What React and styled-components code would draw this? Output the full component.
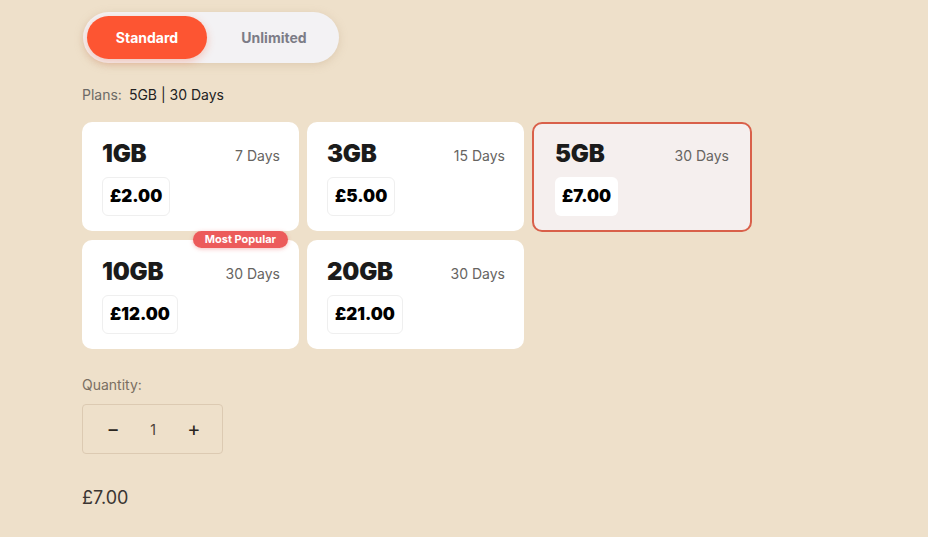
import styled, { createGlobalStyle } from "styled-components";

const plans = [
  { size: "1GB", days: "7 Days", price: "£2.00" },
  { size: "3GB", days: "15 Days", price: "£5.00" },
  { size: "5GB", days: "30 Days", price: "£7.00", selected: true },
  { size: "10GB", days: "30 Days", price: "£12.00", popular: true },
  { size: "20GB", days: "30 Days", price: "£21.00" },
];

const GlobalStyle = createGlobalStyle`
  html, body {
    margin: 0;
    background: #eee0ca;
  }
  body {
    font-family: Inter, "Open Sans", sans-serif;
    color: #1f1f1f;
  }
`;

const App = () => {
  return (
    <Page>
      <GlobalStyle />
      <Toggle>
        <ToggleButton $active>Standard</ToggleButton>
        <ToggleButton>Unlimited</ToggleButton>
      </Toggle>

      <PlansLabel>
        Plans:<strong>5GB | 30 Days</strong>
      </PlansLabel>

      <PlanGrid>
        {plans.map(({ size, days, price, selected, popular }) => (
          <PlanCard key={size} $selected={selected}>
            {popular && <Badge>Most Popular</Badge>}
            <CardHead>
              <h3>{size}</h3>
              <span>{days}</span>
            </CardHead>
            <Price $selected={selected}>{price}</Price>
          </PlanCard>
        ))}
      </PlanGrid>

      <QtyLabel>Quantity:</QtyLabel>
      <Stepper>
        <StepButton>−</StepButton>
        <span>1</span>
        <StepButton>+</StepButton>
      </Stepper>

      <Total>£7.00</Total>
    </Page>
  );
};

export default App;

const Page = styled.div`
  padding: 12px 82px 20px;
  min-height: 537px;
  box-sizing: border-box;
`;

const Toggle = styled.div`
  display: inline-flex;
  align-items: center;
  width: 256px;
  height: 51px;
  padding: 4px;
  box-sizing: border-box;
  margin-left: 1px;
  border-radius: 26px;
  background: #f3f2f4;
  box-shadow: 0 2px 8px rgba(190, 160, 130, 0.35);
`;

const ToggleButton = styled.button`
  flex: ${({ $active }) => ($active ? "0 0 120px" : "1")};
  height: 43px;
  border: none;
  border-radius: 22px;
  font-family: Inter, sans-serif;
  font-size: 14px;
  font-weight: 700;
  color: ${({ $active }) => ($active ? "#fff" : "#7c7c86")};
  background: ${({ $active }) => ($active ? "#fd5532" : "transparent")};
  box-shadow: ${({ $active }) =>
    $active ? "0 3px 8px rgba(240, 90, 50, 0.3)" : "none"};
  padding: 0;
  padding-left: ${({ $active }) => ($active ? "0" : "6px")};
`;

const PlansLabel = styled.p`
  margin: 23px 0 0;
  font-size: 14px;
  color: #6c6a66;
  line-height: 18px;

  strong {
    font-weight: 400;
    color: #222;
    margin-left: 7px;
  }
`;

const PlanGrid = styled.div`
  display: grid;
  grid-template-columns: repeat(3, 217px);
  gap: 9px 8px;
  margin-top: 18px;
`;

const PlanCard = styled.div`
  position: relative;
  box-sizing: border-box;
  padding: ${({ $selected }) => ($selected ? "16px 21px 0 21px" : "18px 19px 0 20px")};
  margin: ${({ $selected }) => ($selected ? "0 -3px -1px 0" : "0")};
  height: ${({ $selected }) => ($selected ? "110px" : "109px")};
  border-radius: 10px;
  background: ${({ $selected }) => ($selected ? "#f5efee" : "#fff")};
  border: ${({ $selected }) => ($selected ? "2px solid #d9604a" : "none")};
`;

const CardHead = styled.div`
  display: flex;
  justify-content: space-between;
  align-items: center;

  h3 {
    margin: 0;
    font-family: Inter, sans-serif;
    font-size: 24px;
    font-weight: 900;
    letter-spacing: -0.2px;
    line-height: 28px;
    color: #1b1b1b;
  }
  span {
    font-size: 14px;
    color: #666461;
    padding-top: 2px;
  }
`;

const Price = styled.div`
  display: inline-block;
  margin-top: 9px;
  padding: 0 7px;
  height: 39px;
  border-radius: 6px;
  box-sizing: border-box;
  font-size: 17px;
  font-weight: 900;
  color: #000;
  background: #fff;
  border: ${({ $selected }) => ($selected ? "none" : "1.5px solid #efefef")};
  line-height: ${({ $selected }) => ($selected ? "39px" : "36px")};
`;

const Badge = styled.span`
  position: absolute;
  top: -9px;
  right: 11px;
  height: 17px;
  padding: 0 12px;
  border-radius: 9px;
  background: #ec5b5b;
  box-shadow: 0 1px 4px rgba(236, 91, 91, 0.4);
  color: #fff;
  font-size: 11px;
  font-weight: 700;
  line-height: 17px;
`;

const QtyLabel = styled.p`
  margin: 27px 0 0;
  font-size: 14px;
  color: #7a6f62;
  line-height: 18px;
`;

const Stepper = styled.div`
  display: flex;
  align-items: center;
  justify-content: space-between;
  width: 141px;
  height: 50px;
  box-sizing: border-box;
  margin-top: 10px;
  padding: 0 18px 0 20px;
  border: 1px solid #dccab2;
  border-radius: 4px;
  font-size: 14px;
  color: #4a4036;

  span {
    margin-left: -1px;
  }
`;

const StepButton = styled.button`
  border: none;
  background: transparent;
  font-family: Inter, sans-serif;
  font-size: 20px;
  color: #2a2520;
  width: 20px;
  padding: 0;
`;

const Total = styled.div`
  margin-top: 33px;
  font-size: 18px;
  color: #3a3532;
`;
